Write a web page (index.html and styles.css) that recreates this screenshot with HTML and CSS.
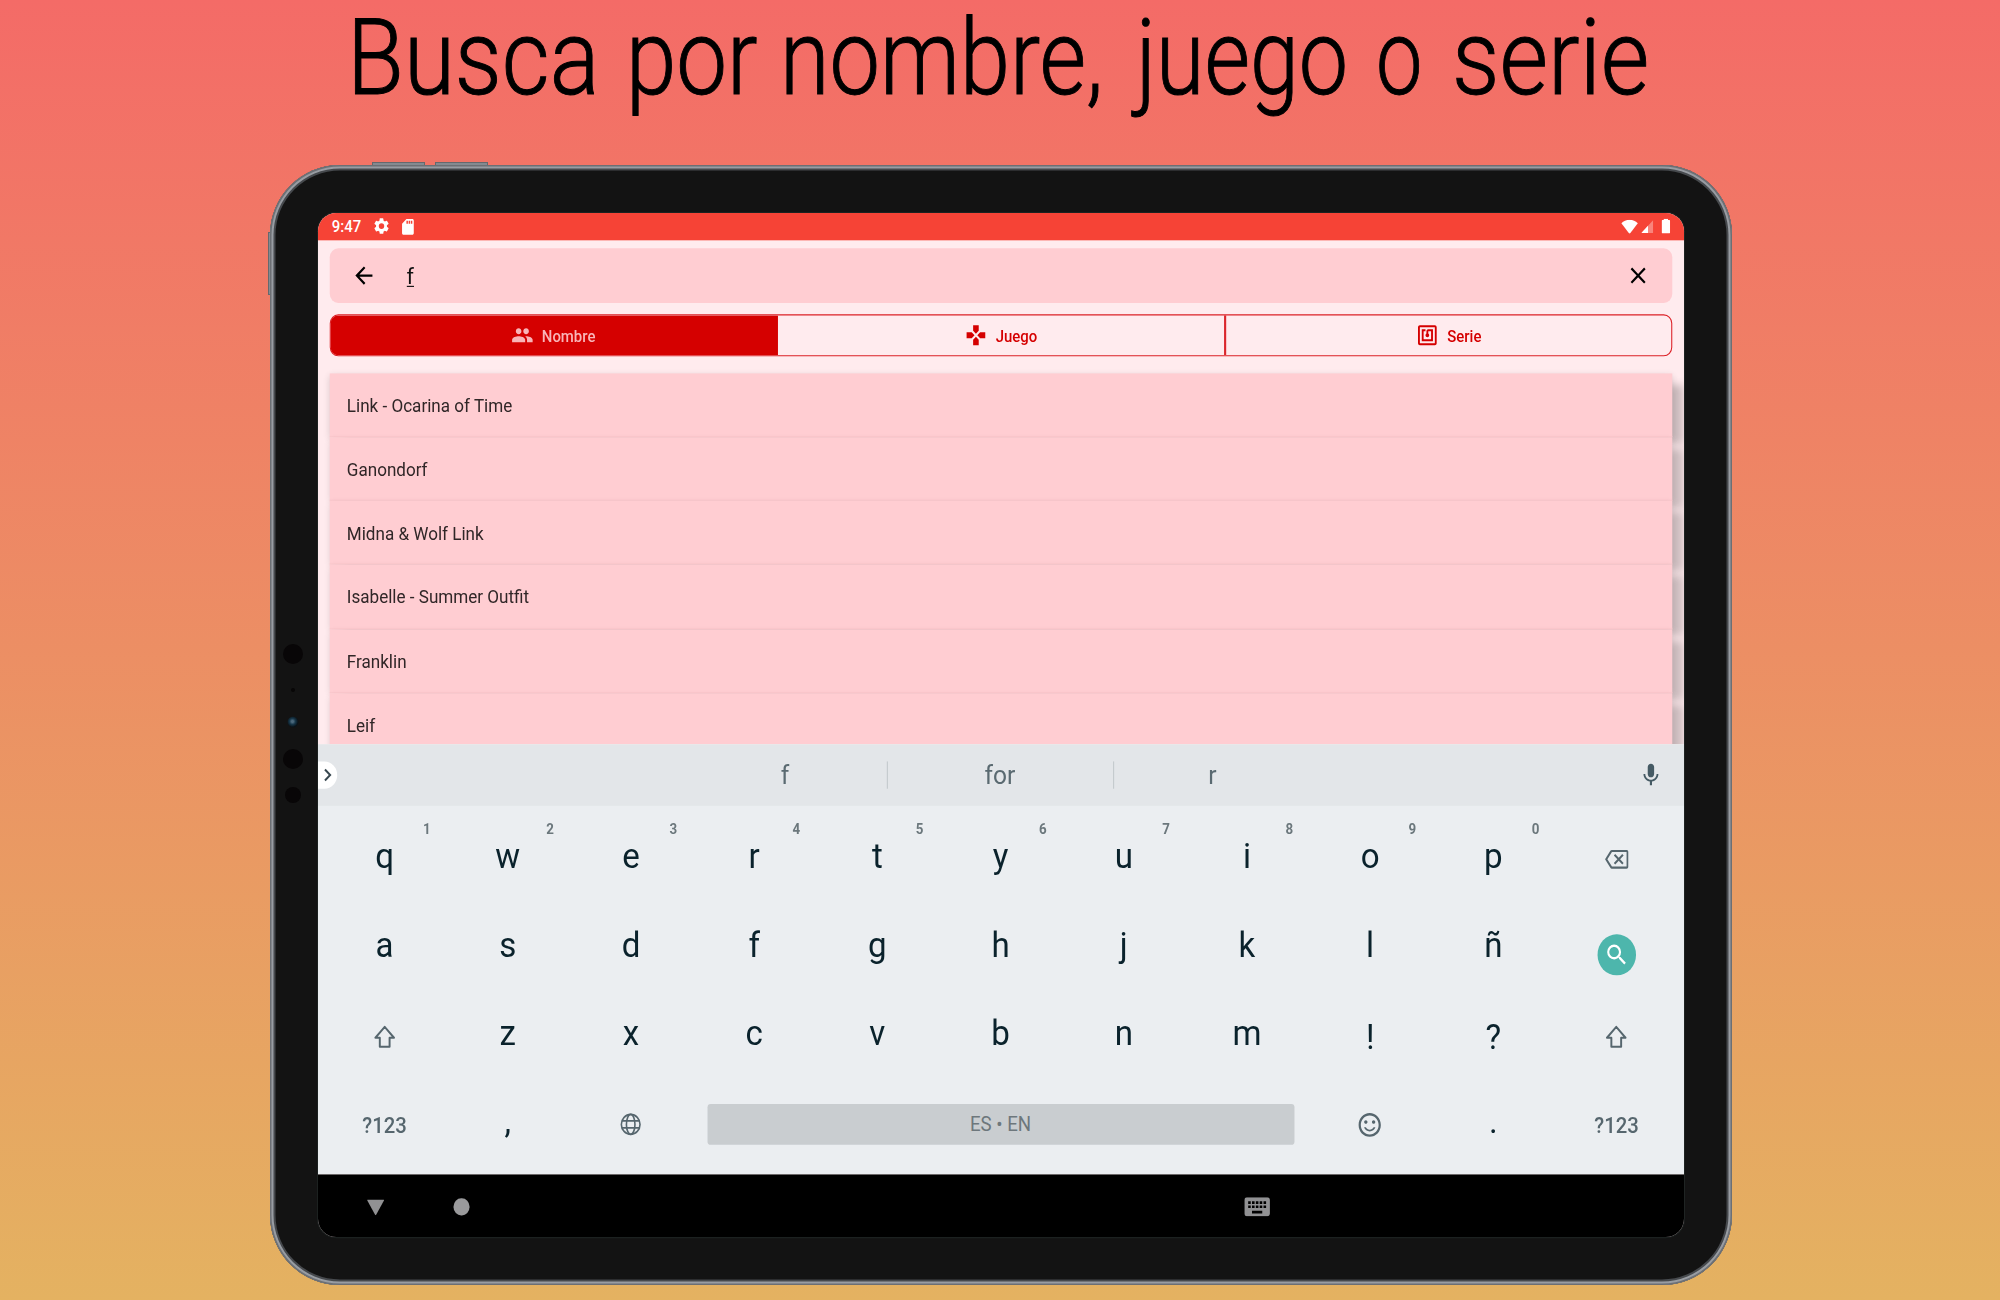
FILE: index.html
```html
<!DOCTYPE html>
<html lang="es">
<head>
<meta charset="utf-8">
<title>Busca por nombre, juego o serie</title>
<link rel="stylesheet" href="styles.css">
</head>
<body>
<h1 class="headline"><span class="w1">Busca</span> <span class="w2">por</span> <span class="w3">nombre,</span> <span class="w4">juego</span> <span class="w5">o</span> <span class="w6">serie</span></h1>
<div class="device">
  <i class="button button-a"></i><i class="button button-b"></i><i class="button button-side"></i>
  <i class="dot dot-1"></i><i class="dot dot-2"></i><i class="dot lens"></i><i class="dot dot-4"></i><i class="dot dot-5"></i>
  <div class="viewport">
    <div class="screen">
      <header class="status">
        <span class="clock">9:47</span>
        <svg class="gear" viewBox="0 0 24 24"><path d="M19.14 12.94c.04-.3.06-.61.06-.94 0-.32-.02-.64-.07-.94l2.03-1.58a.49.49 0 0 0 .12-.61l-1.92-3.32a.488.488 0 0 0-.59-.22l-2.39.96c-.5-.38-1.03-.7-1.62-.94L14.4 2.81a.484.484 0 0 0-.48-.41h-3.84c-.24 0-.43.17-.47.41L9.25 5.35c-.59.24-1.13.57-1.62.94l-2.39-.96c-.22-.08-.47 0-.59.22L2.74 8.87c-.12.21-.08.47.12.61l2.03 1.58c-.05.3-.09.63-.09.94s.02.64.07.94l-2.03 1.58a.49.49 0 0 0-.12.61l1.92 3.32c.12.22.37.29.59.22l2.39-.96c.5.38 1.03.7 1.62.94l.36 2.54c.05.24.24.41.48.41h3.84c.24 0 .44-.17.47-.41l.36-2.54c.59-.24 1.13-.56 1.62-.94l2.39.96c.22.08.47 0 .59-.22l1.92-3.32c.12-.22.07-.47-.12-.61zM12 15.6A3.6 3.6 0 1 1 12 8.4a3.6 3.6 0 0 1 0 7.2z"/></svg>
        <svg class="card" viewBox="0 0 24 24"><path d="M18 2h-8L4.02 8 4 20c0 1.1.9 2 2 2h12c1.1 0 2-.9 2-2V4c0-1.1-.9-2-2-2zm-6 6h-2V4h2zm3 0h-2V4h2zm3 0h-2V4h2z"/></svg>
        <svg class="wifi" viewBox="0 0 16 13"><path d="M8 13 0 3.2Q3.200 0 8 0t8 3.200z"/></svg>
        <svg class="signal" viewBox="0 0 12 12"><path opacity=".35" d="M12 0v12H0z"/><path d="M6.500 5.500V12H0z"/></svg>
        <svg class="battery" viewBox="0 0 8 13"><path d="M2 0h4v1.200h1.200q.8 0 .8.800v10.200q0 .8-.8.800H.8q-.8 0-.8-.8V2q0-.8.800-.8H2z"/></svg>
      </header>
      <main class="app">
        <div class="search">
          <svg class="back" viewBox="0 0 24 24"><path d="M20 11H7.830l5.590-5.590L12 4l-8 8 8 8 1.410-1.410L7.830 13H20z"/></svg>
          <span class="query">f</span>
          <svg class="clear" viewBox="0 0 24 24"><path d="M19 6.410 17.590 5 12 10.590 6.410 5 5 6.410 10.590 12 5 17.590 6.410 19 12 13.410 17.590 19 19 17.590 13.410 12z"/></svg>
        </div>
        <nav class="segments">
          <div class="segment active"><svg viewBox="0 0 24 24"><path d="M16 11c1.660 0 2.990-1.340 2.990-3S17.660 5 16 5s-3 1.340-3 3 1.340 3 3 3zm-8 0c1.660 0 2.990-1.340 2.990-3S9.660 5 8 5 5 6.340 5 8s1.340 3 3 3zm0 2c-2.330 0-7 1.170-7 3.500V19h14v-2.500C15 14.170 10.330 13 8 13zm8 0c-.29 0-.62.02-.97.05C16.190 13.890 17 15.020 17 16.500V19h6v-2.500c0-2.330-4.670-3.500-7-3.500z"/></svg>Nombre</div>
          <div class="segment"><svg viewBox="0 0 24 24"><path d="M15 7.500V2H9v5.500l3 3zM7.500 9H2v6h5.500l3-3zM9 16.500V22h6v-5.500l-3-3zM16.500 9l-3 3 3 3H22V9z"/></svg>Juego</div>
          <div class="segment"><svg viewBox="0 0 24 24"><path d="M20 2H4c-1.100 0-2 .9-2 2v16c0 1.100.9 2 2 2h16c1.100 0 2-.9 2-2V4c0-1.100-.9-2-2-2zm0 18H4V4h16zM18 6h-5c-1.100 0-2 .9-2 2v2.280c-.6.350-1 .98-1 1.720 0 1.100.9 2 2 2s2-.9 2-2c0-.74-.4-1.380-1-1.720V8h3v8H8V8h2V6H6v12h12z"/></svg>Serie</div>
        </nav>
        <div class="results">
          <div class="result">Link - Ocarina of Time</div>
          <div class="result">Ganondorf</div>
          <div class="result">Midna &amp; Wolf Link</div>
          <div class="result">Isabelle - Summer Outfit</div>
          <div class="result">Franklin</div>
          <div class="result">Leif</div>
        </div>
      </main>
      <section class="keyboard">
        <div class="suggestions">
          <span class="expand"><svg viewBox="0 0 24 24"><path d="M8.600 16.600 13.200 12 8.600 7.400 10 6l6 6-6 6z"/></svg></span>
          <span class="words"><span>f</span><span>for</span><span>r</span></span>
          <svg class="mic" viewBox="0 0 24 24"><path d="M12 14c1.660 0 2.990-1.340 2.990-3L15 5c0-1.660-1.340-3-3-3S9 3.340 9 5v6c0 1.660 1.340 3 3 3zm5.300-3c0 3-2.540 5.100-5.300 5.100S6.700 14 6.700 11H5c0 3.410 2.720 6.230 6 6.720V21h2v-3.280c3.280-.48 6-3.300 6-6.720z"/></svg>
        </div>
        <div class="keys">
          <span>q<sup>1</sup></span><span>w<sup>2</sup></span><span>e<sup>3</sup></span><span>r<sup>4</sup></span><span>t<sup>5</sup></span><span>y<sup>6</sup></span><span>u<sup>7</sup></span><span>i<sup>8</sup></span><span>o<sup>9</sup></span><span>p<sup>0</sup></span>
          <span class="icon"><svg class="erase" viewBox="0 0 24 24"><path d="M22 3H7c-.69 0-1.230.35-1.590.88L0 12l5.410 8.110c.36.53.9.890 1.590.890h15c1.100 0 2-.9 2-2V5c0-1.100-.9-2-2-2zm0 16H7.070L2.400 12l4.660-7H22zm-11.590-2L14 13.410 17.590 17 19 15.590 15.410 12 19 8.410 17.590 7 14 10.590 10.410 7 9 8.410 12.590 12 9 15.590z"/></svg></span>
          <span>a</span><span>s</span><span>d</span><span>f</span><span>g</span><span>h</span><span>j</span><span>k</span><span>l</span><span>ñ</span>
          <span class="icon"><i class="go"><svg viewBox="0 0 24 24"><path d="M15.500 14h-.79l-.28-.27A6.471 6.471 0 0 0 16 9.500 6.500 6.500 0 1 0 9.500 16c1.610 0 3.090-.59 4.230-1.570l.27.280v.79l5 4.990L20.490 19zm-6 0C7.010 14 5 11.990 5 9.500S7.010 5 9.500 5 14 7.010 14 9.500 11.990 14 9.500 14z"/></svg></i></span>
          <span class="icon"><svg class="shift" viewBox="0 0 24 24"><path d="M12 2.500 21.500 13H17v8.500H7V13H2.500z"/></svg></span>
          <span>z</span><span>x</span><span>c</span><span>v</span><span>b</span><span>n</span><span>m</span><span class="low">!</span><span class="low">?</span>
          <span class="icon"><svg class="shift" viewBox="0 0 24 24"><path d="M12 2.500 21.500 13H17v8.500H7V13H2.500z"/></svg></span>
          <span class="mode">?123</span><span class="punct">,</span>
          <span class="icon"><svg class="globe" viewBox="0 0 24 24"><circle cx="12" cy="12" r="10.500"/><ellipse cx="12" cy="12" rx="4.800" ry="10.500"/><path d="M2.200 8.300h19.600M2.200 15.700h19.600"/></svg></span>
          <span class="space"><b>ES • EN</b></span>
          <span class="icon"><svg class="smile" viewBox="0 0 24 24"><path d="M11.990 2C6.470 2 2 6.480 2 12s4.470 10 9.990 10C17.520 22 22 17.520 22 12S17.520 2 11.990 2zM12 20c-4.420 0-8-3.580-8-8s3.580-8 8-8 8 3.580 8 8-3.580 8-8 8zm3.500-9c.83 0 1.500-.67 1.500-1.500S16.330 8 15.500 8 14 8.670 14 9.500s.67 1.500 1.500 1.500zm-7 0c.83 0 1.500-.67 1.500-1.500S9.330 8 8.500 8 7 8.670 7 9.500 7.670 11 8.500 11zm3.500 5c-1.480 0-2.750-.81-3.450-2H6.880c.8 2.050 2.790 3.500 5.120 3.500s4.320-1.450 5.120-3.500h-1.670c-.7 1.190-1.970 2-3.450 2z"/></svg></span>
          <span class="punct">.</span><span class="mode">?123</span>
        </div>
      </section>
      <footer class="navbar">
        <svg class="hide" viewBox="0 0 16 14"><path d="M.5 0h15q.7.100.3.900L8.500 13.500q-.5.800-1 0L.2.900Q-.2.100.5 0z"/></svg>
        <i class="home"></i>
        <svg class="switcher" viewBox="2 5 20 14"><path d="M20 5H4c-1.100 0-1.990.9-1.990 2L2 17c0 1.100.9 2 2 2h16c1.100 0 2-.9 2-2V7c0-1.100-.9-2-2-2zm-9 3h2v2h-2zm0 3h2v2h-2zM8 8h2v2H8zm0 3h2v2H8zm-1 2H5v-2h2zm0-3H5V8h2zm9 7H8v-2h8zm0-4h-2v-2h2zm0-3h-2V8h2zm3 3h-2v-2h2zm0-3h-2V8h2z"/></svg>
      </footer>
    </div>
  </div>
</div>
</body>
</html>
```
FILE: styles.css
```css
* { box-sizing: border-box; }
body {
  margin: 0;
  width: 2000px;
  height: 1300px;
  overflow: hidden;
  display: flex;
  flex-direction: column;
  align-items: center;
  background: linear-gradient(#f46b67, #e4b261);
  font-family: Roboto, "Liberation Sans", sans-serif;
}
svg { display: block; fill: currentColor; flex: none; }
.headline {
  margin: 0;
  width: 100%;
  height: 164.500px;
  flex: none;
  display: flex;
  padding-left: 347px;
  font-size: 106px;
  line-height: 116px;
  font-weight: 300;
  color: #000;
  white-space: nowrap;
  -webkit-text-stroke: 1px #000;
}
.headline span { flex: none; transform-origin: 0 0; }
/* each word is condensed to a narrow grotesque's proportions */
.w1 { width: 279px; transform: scaleX(.875); }
.w2 { width: 154px; transform: scaleX(.855); }
.w3 { width: 356px; transform: scaleX(.85); }
.w4 { width: 240px; transform: scaleX(.83); }
.w5 { width: 76px; transform: scaleX(.78); }
.w6 { transform: scaleX(.885); }

.device {
  position: relative;
  flex: none;
  width: 1462px;
  height: 1120px;
  margin-left: 2px;
  padding: 48px 48px 0;
  border-radius: 70px;
  background: #131313;
  box-shadow: inset 0 0 0 1.500px #6c6f74, inset 0 0 0 3.500px #989ca2, inset 0 0 0 5.500px #46494d;
}
.button { position: absolute; z-index: -1; background: #858a90; border: 1px solid #65696e; }
.button-a, .button-b { top: -2.500px; width: 53px; height: 6px; }
.button-a { left: 102px; }
.button-b { left: 165px; }
.button-side { left: -2.500px; top: 67px; width: 6px; height: 63px; }
.dot { position: absolute; border-radius: 50%; background: #080607; transform: translate(-50%, -50%); left: 23px; }
.dot-1 { top: 489px; width: 20px; height: 20px; }
.dot-2 { top: 525px; width: 4px; height: 4px; }
.lens { top: 557px; width: 11px; height: 11px; background: radial-gradient(circle at 45% 45%, #4b687c 0 12%, #17374a 35%, #0a1116 65%); }
.dot-4 { top: 594.500px; width: 20px; height: 20px; }
.dot-5 { top: 630px; width: 16px; height: 16px; }

.viewport { width: 1366px; height: 1024px; }
/* 1280x900 layout stretched onto the frame opening */
.screen {
  width: 1280px;
  height: 900px;
  transform: scale(1.0672, 1.1378);
  transform-origin: 0 0;
  border-radius: 17px / 16px;
  overflow: hidden;
  display: flex;
  flex-direction: column;
  background: #ffebee;
  box-shadow: 0 0 0 1px #1c2120;
}
.status {
  flex: none;
  height: 23.500px;
  display: flex;
  align-items: center;
  padding: 0 13px 0 13px;
  background: #f64336;
  color: #fff;
  font-size: 14px;
  font-weight: 500;
}
.clock { width: 38px; }
.gear { width: 17px; height: 17px; }
.card { width: 16.500px; height: 16.500px; margin-left: 7.500px; }
.wifi { width: 16px; height: 12.500px; margin-left: auto; }
.signal { width: 11.500px; height: 11.500px; margin-left: 3px; }
.battery { width: 8px; height: 13px; margin-left: 8px; }

.app { flex: none; height: 443px; overflow: hidden; padding: 7.500px 11px 0; }
.search {
  height: 48px;
  display: flex;
  align-items: center;
  padding: 0 20px;
  border-radius: 8px;
  background: #ffcdd2;
}
.back { width: 24px; height: 24px; color: #000; }
.query { margin-left: 28px; font-size: 20px; text-decoration: underline; text-decoration-thickness: 1px; text-underline-offset: 2px; color: #111; }
.clear { width: 24px; height: 24px; margin-left: auto; color: #000; }
.segments {
  margin-top: 10px;
  height: 36.500px;
  display: grid;
  grid-template-columns: repeat(3, 1fr);
  border: 1px solid #dc2026;
  border-radius: 8px;
  overflow: hidden;
}
.segment {
  display: flex;
  align-items: center;
  justify-content: center;
  gap: 8px;
  padding-top: 1px;
  font-size: 14px;
  font-weight: 500;
  color: #d50000;
  border-left: 2px solid #db262c;
}
.segment.active { background: #d50000; color: #f9b4b8; border-left-color: #d50000; padding-right: 4px; }
.segment.active + .segment { border-left: 0; }
.segment svg { width: 21px; height: 21px; }
.results { margin-top: 15.500px; }
.result {
  height: 56.150px;
  display: flex;
  align-items: center;
  padding: 2px 0 0 16px;
  background: #ffcdd2;
  border-bottom: 1px solid #fcc9ce;
  box-shadow: 12px 8px 7px -2px rgba(50, 45, 45, .26), 0 2px 6px rgba(60, 50, 50, .2);
  font-size: 16px;
  color: #302627;
}
/* later rows sit beneath earlier ones, so only a faint seam shows between them */
.result + .result { box-shadow: 12px 8px 7px -2px rgba(50, 45, 45, .26), 0 2px 6px -1px rgba(60, 50, 50, .2); }

.keyboard { flex: none; height: 378.500px; display: flex; flex-direction: column; background: #ebeef1; }
.suggestions { flex: none; height: 54px; display: flex; align-items: center; background: #e3e6e9; color: #5a6a71; }
.expand { width: 18px; height: 24px; border-radius: 0 12px 12px 0; background: #fff; color: #37474f; display: flex; align-items: center; justify-content: center; }
.expand svg { width: 22px; height: 22px; }
.words { width: 636px; margin-left: 302.500px; display: grid; grid-template-columns: repeat(3, 212px); }
.words span { height: 24px; line-height: 26px; text-align: center; font-size: 23px; }
.words span:nth-child(n+2) { border-left: 1px solid #c3c9cc; }
.words span:first-child { padding-left: 22px; }
.words span:last-child { padding-right: 26px; }
.mic { width: 24px; height: 24px; margin-left: auto; margin-right: 19px; color: #455a64; }
.keys {
  padding: 9px 5.500px 0 4.700px;
  display: grid;
  grid-template-columns: repeat(11, 1fr);
  grid-template-rows: repeat(4, 77.700px);
  font-size: 31px;
  color: #0a222c;
}
.keys > span { position: relative; display: flex; align-items: center; justify-content: center; padding-bottom: 6px; }
.keys > .icon { padding: 0; color: #56666e; }
.keys > .low { padding: 1px 0 0; }
.keys sup { position: absolute; left: calc(50% + 36px); top: 5.500px; font-size: 12.500px; line-height: 14px; font-weight: 700; color: #6b777c; }
.keys > .mode { padding: 2px 0 0; font-size: 19px; font-weight: 500; color: #56666e; }
.keys > .punct { padding: 0 0 6px; }
.keys > .space { grid-column: span 5; padding: 0 13.500px; }
.space b { flex: 1; height: 36px; display: flex; align-items: center; justify-content: center; border-radius: 3px; background: #c9cdd0; font-size: 17.500px; font-weight: 400; color: #6d777c; }
.erase { width: 22px; height: 22px; }
.go { width: 35.500px; height: 35.500px; margin-top: 12px; border-radius: 50%; background: #4db6ac; color: #fff; display: flex; align-items: center; justify-content: center; }
.go svg { width: 24px; height: 24px; }
.shift { width: 23px; height: 22px; fill: none; stroke: currentColor; stroke-width: 2; stroke-linejoin: round; }
.globe { width: 20px; height: 20px; fill: none; stroke: currentColor; stroke-width: 1.800; }
.smile { width: 25px; height: 25px; }

.navbar { flex: 1; display: flex; align-items: center; padding: 2px 0 0 46px; background: #000; color: #919193; }
.hide { width: 16px; height: 14px; }
.home { width: 14.500px; height: 14.500px; margin-left: 65px; border-radius: 50%; background: #9a9a9c; }
.switcher { width: 24px; height: 16.800px; margin-left: 726px; }
```
